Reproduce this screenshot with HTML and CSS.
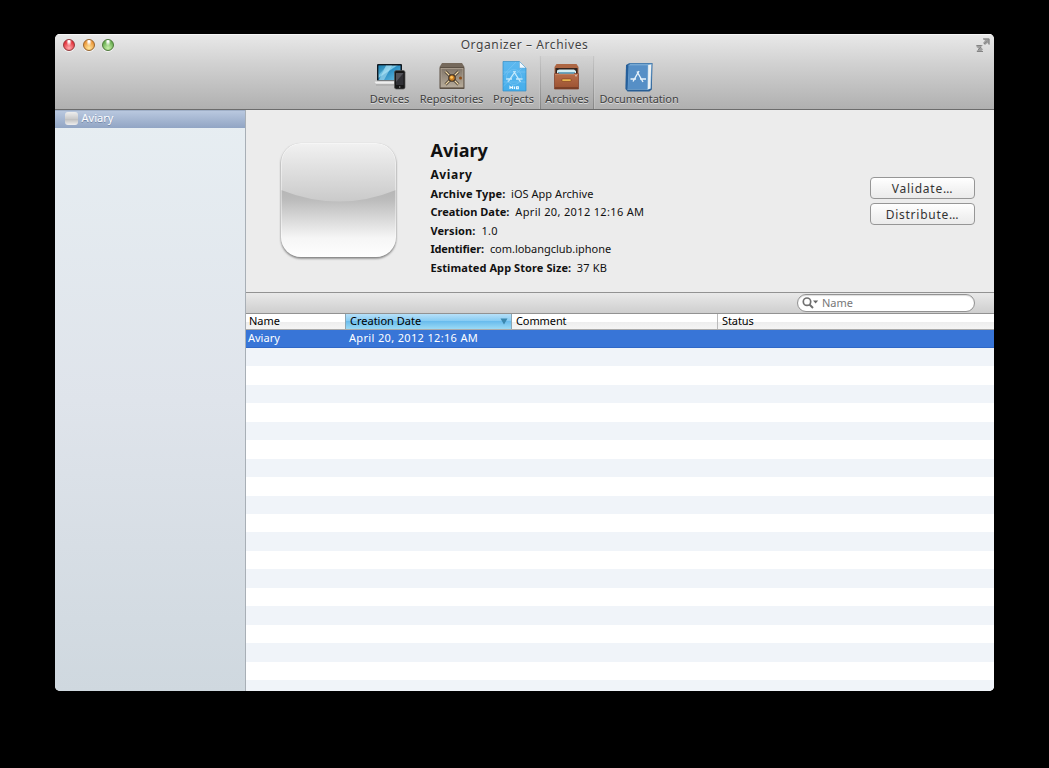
FILE: index.html
```html
<!DOCTYPE html>
<html lang="en">
<head>
<meta charset="utf-8">
<title>Organizer – Archives</title>
<link rel="stylesheet" href="styles.css">
</head>
<body>
<div class="window">
  <header class="toolbar">
    <div class="titlebar">
      <div class="lights"><i class="light red"></i><i class="light amber"></i><i class="light green"></i></div>
      <h1 class="title">Organizer – Archives</h1>
      <svg class="fullscreen" width="14" height="14" viewBox="0 0 14 14"><path d="M7 .5h6.500V7l-2-2-2.500 2L7 5l2-2.500ZM.5 7H7L5 9l2 2.500L5 13.500H.5V13L3 11 .5 9Z" fill="#a0a0a0"/><path d="M7 1h6v5.500M.5 7.500h5M1 13.500h6M8 6l3.500-3M2 12l3-3" fill="none" stroke="#838383"/></svg>
    </div>
    <nav class="tabs">
      <div class="tab devices">
        <svg width="32" height="32" viewBox="0 0 32 32">
          <defs><linearGradient id="scr" x2="1" y2="1"><stop stop-color="#1c86b8"/><stop offset=".4" stop-color="#7fcbe9"/><stop offset=".45" stop-color="#2b8fc4"/><stop offset="1" stop-color="#6bc0e4"/></linearGradient></defs>
          <path d="M4 3h23a1 1 0 0 1 1 1v15.500H3V4a1 1 0 0 1 1-1Z" fill="#101820"/><path d="M4.500 4.500h22v14.500h-22Z" fill="url(#scr)"/><path d="M4.500 4.500H13L4.500 14Z" fill="#1678a8" opacity=".45"/><path d="M12 4.500h6L10 19H5Z" fill="#b6e6f5" opacity=".55"/>
          <path d="M.5 20.200h20.500v2.800H2Q.5 23 .5 20.200Z" fill="#eee" stroke="#bbb" stroke-width=".5"/><path d="M2 24h18" stroke="#777" opacity=".4"/>
          <rect x="20.500" y="9.500" width="10.500" height="18.500" rx="1.800" fill="#171717" stroke="#555" stroke-width=".7"/><path d="M22 12h7.500v12H22Z" fill="#303035"/><path d="M22 12h7.500L22 21Z" fill="#535359"/><circle cx="25.700" cy="26" r=".8" fill="#999"/>
        </svg><span>Devices</span>
      </div>
      <div class="tab repositories">
        <svg width="32" height="32" viewBox="0 0 32 32">
          <defs><linearGradient id="safe" x2="0" y2="1"><stop stop-color="#81766a"/><stop offset="1" stop-color="#b5aa99"/></linearGradient></defs>
          <path d="M6 2h20l2.500 4h-25Z" fill="#75695c"/><rect x="3.500" y="6" width="25" height="22" rx=".8" fill="#5c5145"/><rect x="5" y="7.500" width="22" height="18.500" fill="url(#safe)" stroke="#b3a797" stroke-width=".8"/>
          <path d="m9.500 10.500 13 13M22.500 10.500 9.500 23.500" stroke="#332a22" stroke-width="2.700"/><path d="m9.500 10.500 13 13M22.500 10.500 9.500 23.500" stroke="#f0d8a5" stroke-width="1.400"/><circle cx="16" cy="17" r="3.800" fill="#3d3024"/><circle cx="16" cy="17" r="2.700" fill="#c77b20"/><circle cx="15.600" cy="16.400" r="1.400" fill="#ffc459"/><circle cx="24.500" cy="17" r="1.500" fill="#8d4d18"/>
        </svg><span>Repositories</span>
      </div>
      <div class="tab projects">
        <svg width="32" height="32" viewBox="0 0 32 32">
          <defs><linearGradient id="doc" x2="0" y2="1"><stop stop-color="#5db8ef"/><stop offset="1" stop-color="#45aeeb"/></linearGradient></defs>
          <path d="M5 .5h16.500L28 7v23H5Z" fill="url(#doc)" stroke="#328cc5" stroke-width=".7"/><path d="M5.500 14 18 1M5.500 25 25 6M5.500 11h22M5.500 21h22" stroke="#94d2f8" stroke-width=".4"/><path d="M21.500.5V7H28Z" fill="#f1f9ff" stroke="#62a5ce" stroke-width=".5"/>
          <g fill="none" stroke="#c7eafc" stroke-width="1.300"><path d="m17.500 10-7.500 11M15.500 10l7 11M8 18h6m4 0h6.500"/></g><circle cx="16" cy="16" r="7.500" fill="none" stroke="#86caf5" stroke-width=".5"/>
          <path d="M12 28v-2.500l1.300 1.300 1.300-1.300V28M16.500 25.500V28M18.500 25.800h1.800v2h-1.800Z" fill="none" stroke="#eef9ff" stroke-width="1.100"/>
        </svg><span>Projects</span>
      </div>
      <div class="tab archives active">
        <svg width="32" height="32" viewBox="0 0 32 32">
          <defs><linearGradient id="wood" x2="0" y2="1"><stop stop-color="#b76e4a"/><stop offset="1" stop-color="#9b5131"/></linearGradient></defs>
          <path d="M5.500 3h20L27.500 6v6h-24V6Z" fill="#ad6643"/><path d="M4.500 7h22v6h-22Z" fill="#30231e"/><path d="M6 9.500 8 8.500h15l2 1.500v3H6Z" fill="#d4edf2"/><path d="M7 11h17v2H7Z" fill="#6ba6bf"/><path d="M3.500 12.500h4l1 .8h14l1-.8h4V28h-24Z" fill="url(#wood)" stroke="#7e3b25" stroke-width=".7"/><path d="M4 13.500h23" stroke="#cf8e68" stroke-width=".7"/><rect x="11" y="18" width="9" height="2.300" rx=".5" fill="#f8c65b" stroke="#783817" stroke-width=".6"/><circle cx="25" cy="14.800" r=".7" fill="#eee"/><path d="M4 27h23" stroke="#703a25" stroke-width="1.500"/>
        </svg><span>Archives</span>
      </div>
      <div class="tab documentation">
        <svg width="32" height="32" viewBox="0 0 32 32">
          <path d="M3 4 6.500 2h23L28.800 28.500l-2.500 2H4.500L2.500 28Z" fill="#285e95"/><path d="M6 2.500h23L28 27.500 24.500 29Z" fill="#6fa2ce"/><path d="m25 4 3.200-.5-.8 24-2.900 1Z" fill="#edf1f3"/><path d="M5.500 4H25l-.5 24.500H4.500Z" fill="#568fc6" stroke="#8fbbdc" stroke-width=".5"/><path d="m3 5 2.500-1-1 24.500-1.700-.8Z" fill="#255f9b"/><g fill="none" stroke="#e7f3fc" stroke-width="1.400"><path d="m16 10-6 10.500M14 10.500 20 21M7.500 18h5.500m4 0h6"/></g>
        </svg><span>Documentation</span>
      </div>
    </nav>
  </header>
  <div class="body">
    <aside class="sidebar"><div class="source"><i class="mini"></i><span>Aviary</span></div></aside>
    <main class="main">
      <section class="detail">
        <svg class="appicon" width="124" height="124" viewBox="0 0 124 124">
          <defs><linearGradient id="base" x2="0" y2="1"><stop offset=".38" stop-color="#b3b3b3"/><stop offset=".5" stop-color="#bcbcbc"/><stop offset=".83" stop-color="#f6f6f6"/><stop offset="1" stop-color="#fff"/></linearGradient><linearGradient id="gloss" x2="0" y2="1"><stop stop-color="#f2f2f2"/><stop offset="1" stop-color="#cacaca"/></linearGradient><clipPath id="tile"><rect x="5" y="5" width="115" height="114" rx="20"/></clipPath><filter id="shade" x="-10%" y="-10%" width="120%" height="120%"><feGaussianBlur stdDeviation=".9"/></filter></defs>
          <rect x="5" y="6.500" width="115" height="114" rx="20" fill="#777" filter="url(#shade)"/>
          <g clip-path="url(#tile)"><rect x="4" y="4" width="117" height="116" fill="url(#base)"/><path d="M4 4h117v47.500Q92 63.500 63 63.500T4 51.500Z" fill="url(#gloss)"/></g><rect x="5.500" y="5.500" width="114" height="113" rx="19.500" fill="none" stroke="#fff" stroke-opacity=".4"/>
        </svg>
        <div class="info">
          <h2>Aviary</h2><h3>Aviary</h3>
          <p><b class="l1">Archive Type:</b><span class="v1">iOS App Archive</span></p>
          <p><b class="l2">Creation Date:</b><span class="v2">April 20, 2012 12:16 AM</span></p>
          <p><b class="l3">Version:</b><span class="v3">1.0</span></p>
          <p><b class="l4">Identifier:</b><span class="v4">com.lobangclub.iphone</span></p>
          <p><b class="l5">Estimated App Store Size:</b><span class="v5">37 KB</span></p>
        </div>
        <div class="actions"><button>Validate…</button><button>Distribute…</button></div>
      </section>
      <div class="filter"><div class="search"><svg width="17" height="12" viewBox="0 0 17 12"><circle cx="5" cy="4.700" r="3.700" fill="none" stroke="#707070" stroke-width="1.700"/><path d="m7.500 7.500 3.500 3.500" stroke="#707070" stroke-width="2"/><path d="M11 3.500h5.200L13.600 6.500Z" fill="#666"/></svg><span>Name</span></div></div>
      <div class="row head"><span class="name">Name</span><span class="date"><span>Creation Date</span><svg width="8" height="7" viewBox="0 0 8 7"><path d="M.5.5h7L4 6.500Z" fill="#3b87ae"/></svg></span><span class="comment">Comment</span><span class="status">Status</span></div>
      <div class="row selected"><span class="name">Aviary</span><span class="date">April 20, 2012 12:16 AM</span></div>
      <div class="stripes"></div>
    </main>
  </div>
</div>
</body>
</html>
```
FILE: styles.css
```css
* { box-sizing: border-box; }
body { margin: 0; padding: 34px 55px; height: 768px; overflow: hidden; background: #000; color: #111; font: 11px/14px "Noto Sans", sans-serif; }
h1, h2, h3, p { margin: 0; }
svg { display: block; flex: none; }
.window { width: 939px; height: 657px; display: flex; flex-direction: column; overflow: hidden; border-radius: 5px; background: #ececec; }
.toolbar { height: 76px; flex: none; border-bottom: 1px solid #6c6c6c; background: linear-gradient(#e9e9e9, #d2d2d2 38%, #b0b0b0); box-shadow: inset 0 1px #f7f7f7; }
.titlebar { height: 22px; display: grid; grid-template-columns: 100px 1fr 100px; align-items: center; }
.lights { display: flex; gap: 7.500px; padding-left: 8px; }
.light { width: 12px; height: 12px; border-radius: 50%; border: 1px solid; box-shadow: 0 1px #f4f4f4; }
.red { border-color: #96383b; background: radial-gradient(ellipse at 50% 10%, #fff 0 10%, transparent 40%), radial-gradient(circle at 50% 80%, #ffabad, #e3303a 70%); }
.amber { border-color: #98652b; background: radial-gradient(ellipse at 50% 10%, #fff 0 10%, transparent 40%), radial-gradient(circle at 50% 80%, #ffe59b, #eb9637 70%); }
.green { border-color: #4c7838; background: radial-gradient(ellipse at 50% 10%, #fff 0 10%, transparent 40%), radial-gradient(circle at 50% 80%, #c8efaa, #68ae50 70%); }
.title { text-align: center; font-weight: 400; font-size: 12px; line-height: 22px; color: #424242; letter-spacing: .6px; text-shadow: 0 1px #f2f2f2; }
.fullscreen { justify-self: end; margin-right: 4px; }
.tabs { display: flex; height: 53px; padding-left: 309px; color: #414141; text-shadow: 0 1px #ddd; }
.tab { display: flex; flex-direction: column; align-items: center; padding-top: 5px; line-height: 12px; white-space: nowrap; }
.devices { width: 51px; letter-spacing: .05px; }
.repositories { width: 73px; letter-spacing: -.04px; }
.projects { width: 51px; letter-spacing: -.05px; }
.archives { width: 54px; margin-left: 1px; }
.documentation { width: 90px; letter-spacing: -.1px; }
.active { border: solid #8f8f8f; border-width: 0 1px; border-image: linear-gradient(#c9c9c9, #838383) 1; background: linear-gradient(#d4d4d4, #a6a6a6); box-shadow: 1px 0 #d0d0d066, -1px 0 #d0d0d066; }
.body { flex: 1; min-height: 0; display: flex; }
.sidebar { width: 191px; border-right: 1px solid #a8afb6; background: linear-gradient(#e7eef2, #dfe4eb 50%, #cfd8df); }
.source { height: 18px; display: flex; align-items: center; gap: 4px; padding: 0 0 2px 9.500px; color: #fff; background: linear-gradient(#b9c8df, #91a5c4); border-top: 1px solid #a0b0c8; text-shadow: 0 1px #7389aa; letter-spacing: .02px; }
.source span { margin-top: -1px; }
.mini { width: 13px; height: 13px; border-radius: 3px; background: linear-gradient(#eee, #ccc 50%, #bbb 51%, #eee); }
.main { flex: 1; min-width: 0; display: flex; flex-direction: column; background: #fff; }
.detail { height: 182px; flex: none; display: flex; background: #ececec; }
.appicon { margin: 28px 0 0 30px; }
.info { flex: 1; padding: 29px 0 0 30.400px; white-space: nowrap; }
h2 { font-size: 18px; line-height: 22px; letter-spacing: .05px; }
h3 { font-size: 12px; line-height: 22px; letter-spacing: .65px; padding-top: 3px; height: 24px; }
.info p { height: 18.400px; line-height: 18.400px; display: flex; gap: 6px; }
.l1 { letter-spacing: .15px; }
.v1 { letter-spacing: .04px; }
.v2 { letter-spacing: .34px; }
.l3 { letter-spacing: .1px; }
.v3 { letter-spacing: .3px; }
.l4 { letter-spacing: -.15px; }
.v4 { letter-spacing: -.03px; }
.l5 { letter-spacing: .08px; }
.v5 { letter-spacing: .2px; }
.info p:nth-of-type(1) { gap: 5.500px; }
.info p:nth-of-type(5) { gap: 5.500px; }
.actions { width: 105px; margin: 67px 19px 0 0; display: flex; flex-direction: column; gap: 4px; }
button { height: 22px; padding: 1px 0 0; border: 1px solid #969696; border-radius: 4px; background: linear-gradient(#fff, #f2f2f2 60%, #ebebeb); color: #333; font: 12px/18px "Noto Sans", sans-serif; letter-spacing: .75px; }
.filter { height: 22px; flex: none; border: solid #929292; border-width: 1px 0; padding: 1px 19px 0 0; display: flex; justify-content: flex-end; background: linear-gradient(#e9e9e9, #cecece); }
.search { width: 178px; height: 18px; border: 1px solid #929292; border-radius: 9px; background: #fff; box-shadow: inset 0 1px 1px #ddd; display: flex; align-items: center; padding-left: 4px; gap: 3px; color: #777; }
.row { display: flex; flex: none; white-space: nowrap; }
.head { height: 16px; border-bottom: 1px solid #aaa; line-height: 14px; color: #000; background: linear-gradient(#fff 50%, #ededed 51%, #f5f5f5); }
.row > span { display: flex; }
.name { width: 99px; padding-left: 3px; }
.date { width: 167px; }
.head .date { padding: 0 3px 0 4px; border: solid #8aa6b5; border-width: 0 1px; justify-content: space-between; background: linear-gradient(#b7e0f8, #88ccf3 45%, #6abced 50%, #9bdaf5); }
.head .date svg { margin-top: 4px; }
.comment { width: 205px; padding-left: 4px; letter-spacing: -.1px; }
.status { padding-left: 4px; border-left: 1px solid #bbb; letter-spacing: -.1px; }
.selected { height: 17.500px; line-height: 15px; color: #fff; background: #3875d7; border-bottom: 1px solid #2f68c8; }
.selected .name { padding-left: 2px; }
.selected .date { padding-left: 4px; letter-spacing: .34px; }
.stripes { flex: 1; background: repeating-linear-gradient(#f0f4f9 0 18.450px, #fff 18.450px 36.900px); }
```
